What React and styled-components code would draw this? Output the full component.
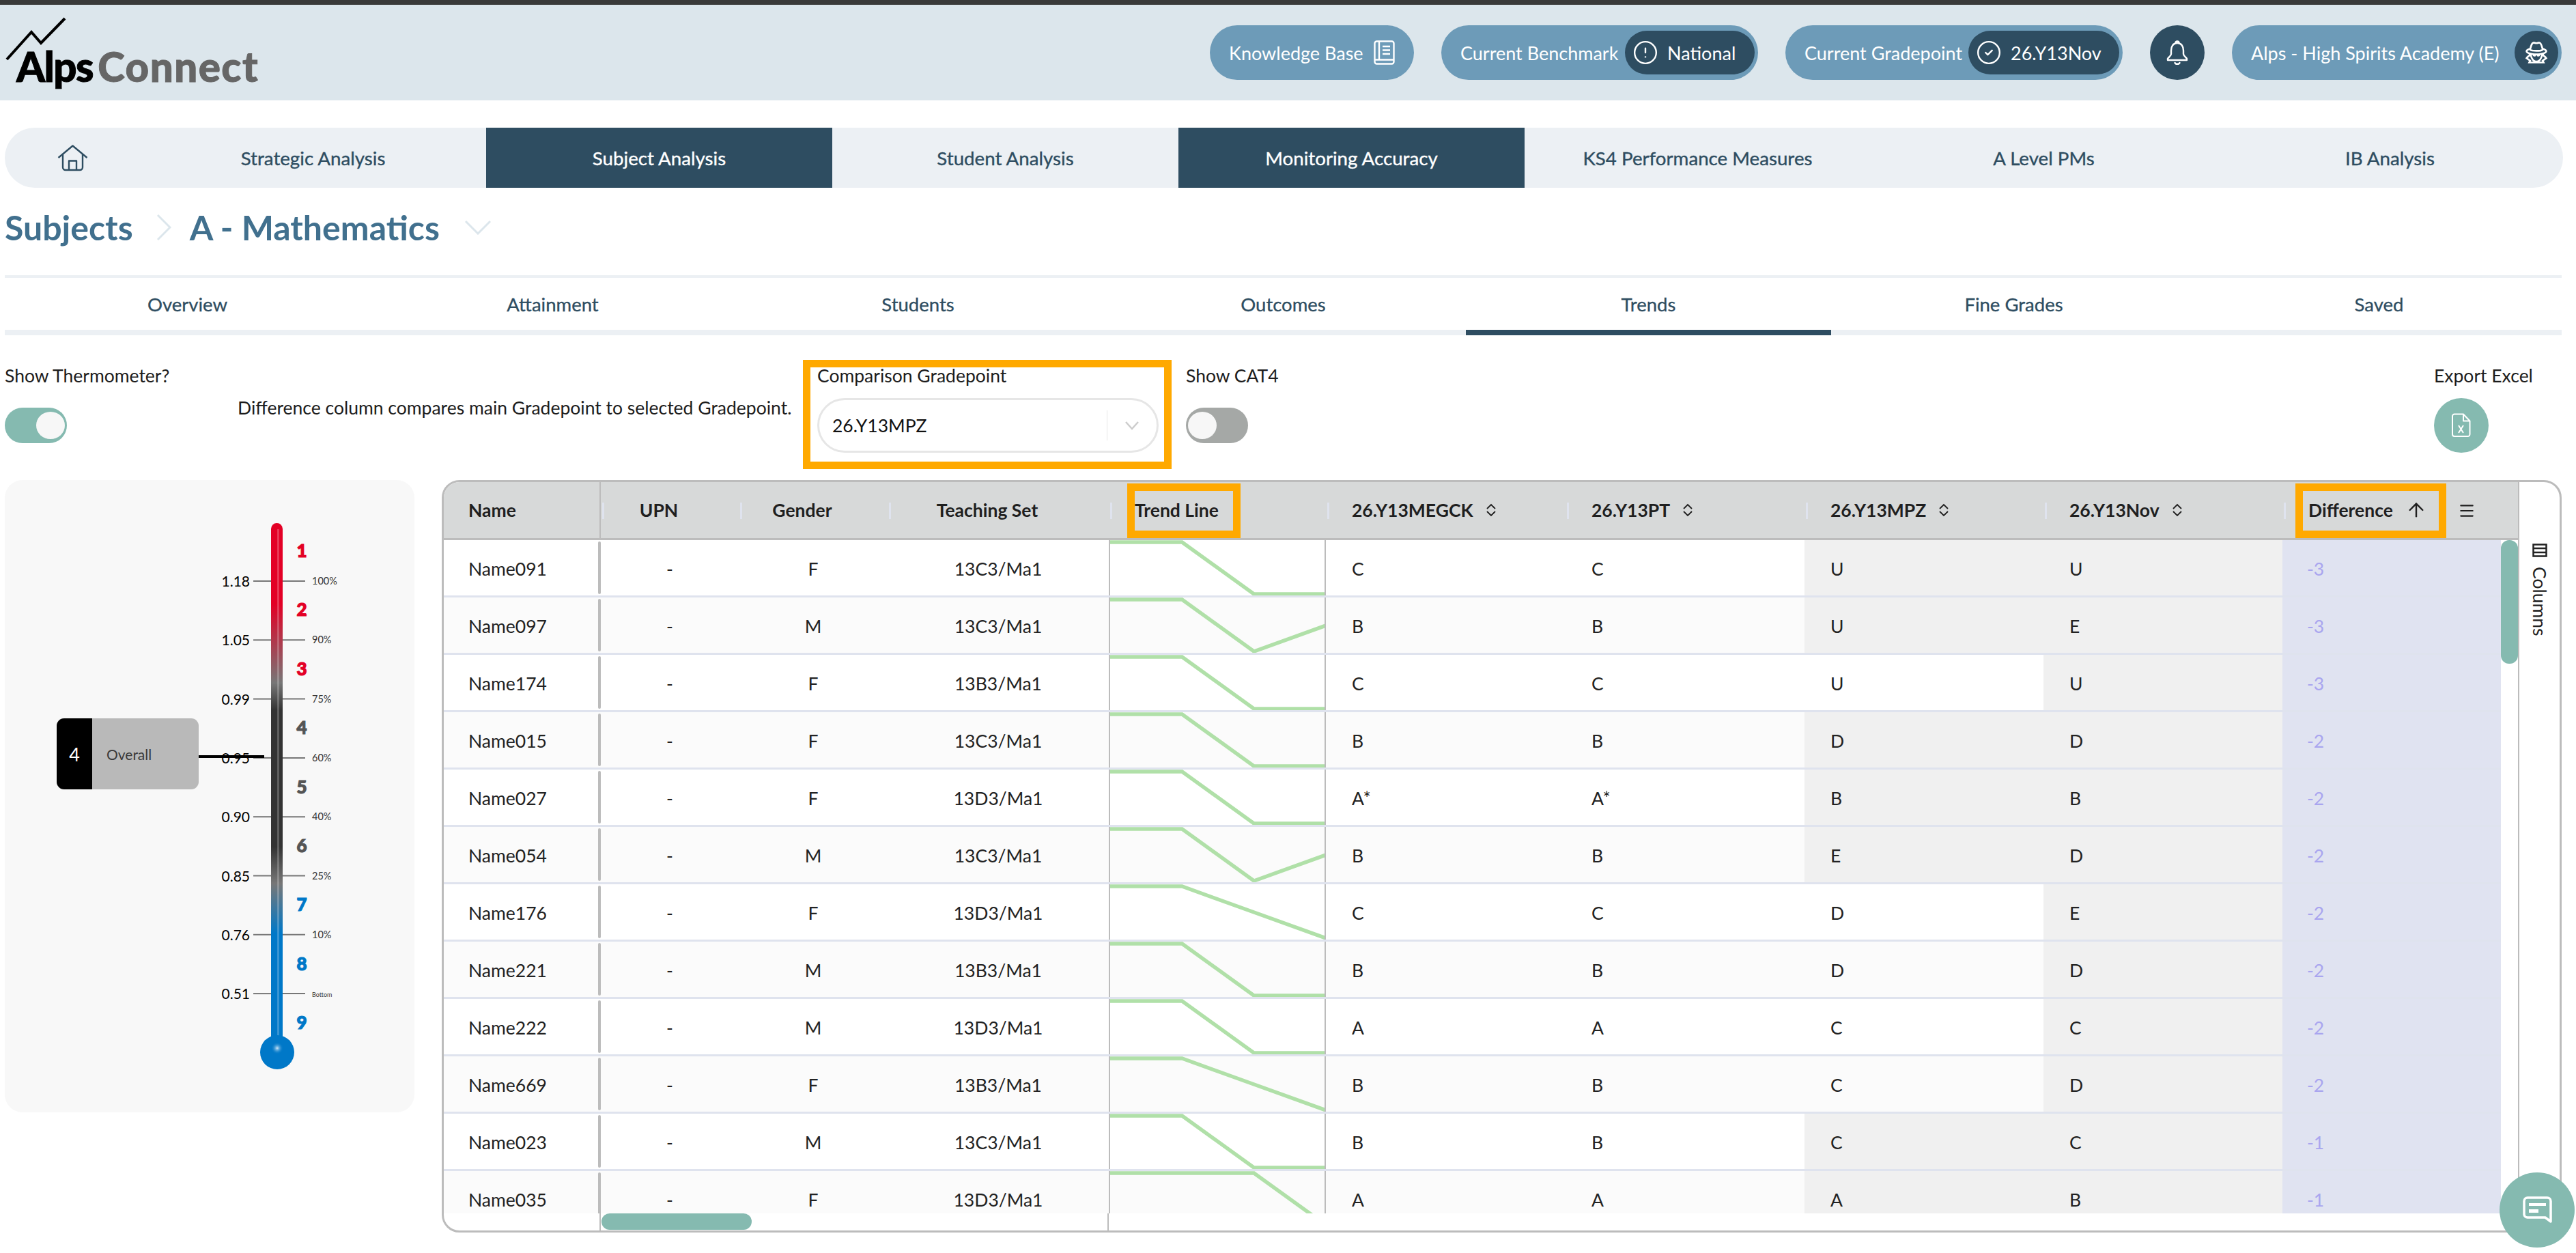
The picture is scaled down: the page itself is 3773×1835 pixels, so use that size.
import React from "react";
import styled, { createGlobalStyle } from "styled-components";
import { ArrowUp, CircleAlert, CircleCheck, Menu } from "lucide-react";
import { LiaUserSecretSolid } from "react-icons/lia";

const navy = "#2e4d61";
const steel = "#6d9bb8";
const teal = "#85bab0";
const orange = "#ffa900";
const mist = "#ecf0f4";
const frameGrey = "#bcbcbc";
const rowLine = "#dfe3ee";

const GlobalStyle = createGlobalStyle`
  html, body {
    margin: 0;
    padding: 0;
    background: #fff;
    font-family: Lato, "Noto Sans", sans-serif;
    color: #222;
  }
`;

const Page = styled.div`
  position: relative;
  width: 3773px;
  height: 1835px;
  overflow: hidden;
  background: #fff;
`;

const TopStrip = styled.div`
  height: 7px;
  background: #3a3a3a;
`;

const Header = styled.header`
  height: 140px;
  background: #dce6ec;
  display: flex;
  align-items: center;
  gap: 40px;
  padding-right: 21px;
  box-sizing: border-box;
`;

const Logo = styled.div`
  position: relative;
  margin-right: auto;
  margin-left: 24px;
  margin-top: 40px;
  display: flex;
  align-items: baseline;
  gap: 7px;
  font-family: Lato, sans-serif;
  font-weight: 900;
  font-size: 60px;
  line-height: 66px;
`;

const LogoAlps = styled.span`
  color: #000;
  letter-spacing: -1.5px;
  -webkit-text-stroke: 1px #000;
`;

const LogoConnect = styled.span`
  color: #666;
  letter-spacing: 1.5px;
  -webkit-text-stroke: 1px #666;
`;

const LogoPeak = styled.svg`
  position: absolute;
  left: -17px;
  top: -40px;
`;

const Pill = styled.div`
  width: ${(p) => p.$w}px;
  height: 80px;
  border-radius: 40px;
  background: ${steel};
  color: #fff;
  box-sizing: border-box;
  padding: 8px 5px 8px 28px;
  display: flex;
  align-items: center;
  justify-content: space-between;
  font-size: 27px;
  white-space: nowrap;
`;

const PlainPill = styled(Pill)`
  padding-right: 28px;
`;

const PillValue = styled.div`
  width: ${(p) => p.$w}px;
  height: 64px;
  border-radius: 32px;
  background: ${navy};
  display: flex;
  align-items: center;
  gap: 13px;
  padding-left: 11px;
  box-sizing: border-box;
`;

const Avatar = styled.div`
  width: 64px;
  height: 64px;
  border-radius: 50%;
  background: ${navy};
  display: flex;
  align-items: center;
  justify-content: center;
`;

const BellButton = styled.div`
  width: 80px;
  height: 80px;
  border-radius: 50%;
  background: ${navy};
  display: flex;
  align-items: center;
  justify-content: center;
`;

const Nav = styled.nav`
  margin: 40px 0 0 7px;
  width: 3747px;
  height: 88px;
  background: ${mist};
  border-radius: 44px;
  display: flex;
  overflow: hidden;
`;

const NavHome = styled.div`
  width: 198px;
  display: flex;
  align-items: center;
  justify-content: center;
`;

const NavItem = styled.div`
  width: 507px;
  display: flex;
  align-items: center;
  justify-content: center;
  font-size: 27.7px;
  -webkit-text-stroke: 0.35px currentColor;
  color: ${(p) => (p.$active ? "#fff" : navy)};
  background: ${(p) => (p.$active ? navy : "transparent")};
`;

const Breadcrumb = styled.div`
  height: 128px;
  box-sizing: border-box;
  padding: 0 0 12px 7px;
  display: flex;
  align-items: center;
  font-size: 50px;
  font-weight: 700;
  color: #41708e;
`;

const CrumbText = styled.span`
  white-space: nowrap;
  margin-left: ${(p) => p.$gap || 0}px;
`;

const CrumbChevron = styled.svg`
  margin-left: ${(p) => p.$gap}px;
`;

const Tabs = styled.div`
  margin-left: 7px;
  width: 3745px;
  display: grid;
  grid-template-columns: repeat(7, 1fr);
  border-top: 4px solid ${mist};
`;

const Tab = styled.div`
  height: 84px;
  box-sizing: border-box;
  padding-top: 1px;
  display: flex;
  align-items: center;
  justify-content: center;
  font-size: 27.5px;
  -webkit-text-stroke: 0.3px currentColor;
  color: ${navy};
  border-bottom: 8px solid ${(p) => (p.$active ? navy : mist)};
`;

const Controls = styled.div`
  margin-top: 36px;
  height: 160px;
  padding-left: 7px;
  display: flex;
  align-items: flex-start;
  font-size: 26.5px;
  color: #1c1c1c;
`;

const Field = styled.div`
  padding-top: 7px;
  width: ${(p) => p.$w}px;
  margin-left: ${(p) => p.$left || 0}px;
  flex: none;
`;

const FieldLabel = styled.div`
  line-height: 32px;
  white-space: nowrap;
`;

const Toggle = styled.div`
  margin-top: 31px;
  width: 91px;
  height: 52px;
  border-radius: 26px;
  background: ${(p) => (p.$on ? teal : "#a5a8a6")};
  box-sizing: border-box;
  padding: 6px 3px;
  display: flex;
  justify-content: ${(p) => (p.$on ? "flex-end" : "flex-start")};
  &::after {
    content: "";
    width: 42px;
    height: 40px;
    border-radius: 50%;
    background: #f7f7f7;
  }
`;

const DiffNote = styled.div`
  margin: 54px 0 0 96px;
  width: 828px;
  flex: none;
  line-height: 32px;
  white-space: nowrap;
`;

const HighlightBox = styled.div`
  width: 540px;
  height: 160px;
  flex: none;
  box-sizing: border-box;
  border: 11px solid ${orange};
  padding: 0 8px 0 10px;
`;

const HighlightLabel = styled(FieldLabel)`
  margin-top: -4px;
  padding-top: 0;
`;

const SelectBox = styled.div`
  margin-top: 17px;
  width: 500px;
  height: 80px;
  box-sizing: border-box;
  border: 3px solid #e6e6e6;
  border-radius: 40px;
  display: flex;
  align-items: center;
  padding-left: 19px;
  color: #111;
`;

const SelectValue = styled.span`
  flex: 1;
`;

const SelectArrow = styled.div`
  width: 72px;
  height: 44px;
  border-left: 1px solid #e6e6e6;
  display: flex;
  align-items: center;
  justify-content: center;
`;

const ExportField = styled(Field)`
  margin-left: auto;
  margin-right: 62px;
`;

const ExportButton = styled.div`
  margin-top: 17px;
  width: 80px;
  height: 80px;
  border-radius: 50%;
  background: ${teal};
  display: flex;
  align-items: center;
  justify-content: center;
`;

const Body = styled.div`
  margin-top: 16px;
  padding-left: 7px;
  display: flex;
  align-items: flex-start;
  gap: 40px;
`;

const ThermoPanel = styled.div`
  position: relative;
  width: 600px;
  height: 926px;
  border-radius: 26px;
  background: #f8f8f8;
  overflow: hidden;
  flex: none;
`;

const ThermoSvg = styled.svg`
  display: block;
  font-family: Lato, sans-serif;
`;

const LevelCard = styled.div`
  position: absolute;
  left: 76px;
  top: 349px;
  width: 208px;
  height: 104px;
  border-radius: 11px;
  overflow: hidden;
  background: #b9b9b9;
  display: flex;
  align-items: center;
  color: #3a3a3a;
  font-size: 21px;
`;

const LevelNumber = styled.div`
  width: 52px;
  height: 100%;
  background: #000;
  color: #fff;
  font-size: 27px;
  display: flex;
  align-items: center;
  justify-content: center;
  margin-right: 21px;
`;

const TableFrame = styled.div`
  width: 3105px;
  height: 1102px;
  box-sizing: border-box;
  border: 3px solid ${frameGrey};
  border-radius: 26px;
  overflow: hidden;
  display: flex;
  flex: none;
`;

const GridArea = styled.div`
  width: 3038px;
  flex: none;
  display: flex;
  flex-direction: column;
`;

const headColumns = "230px 202px 218px 324px 318px 351px 350px 350px 350px 345px";
const rowColumns = "230px 202px 218px 324px 318px 351px 350px 350px 350px 320px";

const HeadRow = styled.div`
  height: 85px;
  box-sizing: border-box;
  display: grid;
  grid-template-columns: ${headColumns};
  background: #d7d9d9;
  border-bottom: 3px solid ${frameGrey};
  font-size: 26.5px;
  font-weight: 700;
  color: #1f1f1f;
`;

const HeadCell = styled.div`
  position: relative;
  display: flex;
  align-items: center;
  justify-content: ${(p) => (p.$center ? "center" : "flex-start")};
  gap: 18px;
  box-sizing: border-box;
  padding: ${(p) => (p.$center ? "0 32px 0 0" : `0 0 0 ${p.$pad ?? 38}px`)};
  border-right: ${(p) => (p.$frozen ? `2px solid ${frameGrey}` : "none")};
  &::before {
    content: "";
    display: ${(p) => (p.$frozen ? "none" : "block")};
    position: absolute;
    left: 2px;
    top: 30px;
    height: 24px;
    width: 3px;
    background: #dfe3ee;
  }
`;

const CalloutBox = styled.div`
  position: absolute;
  top: 2px;
  left: ${(p) => p.$left}px;
  width: ${(p) => p.$w}px;
  height: 80px;
  box-sizing: border-box;
  border: 11px solid ${orange};
`;

const ColumnMenu = styled.div`
  position: absolute;
  left: 257px;
  top: 29px;
  display: flex;
`;

const BodyArea = styled.div`
  height: 986px;
  display: flex;
  overflow: hidden;
`;

const Rows = styled.div`
  width: 3013px;
  flex: none;
`;

const Row = styled.div`
  height: 84px;
  box-sizing: border-box;
  display: grid;
  grid-template-columns: ${rowColumns};
  background: ${(p) => (p.$even ? "#fbfbfb" : "#fff")};
  border-bottom: 3px solid ${rowLine};
  font-size: 26.5px;
  color: #222;
`;

const Cell = styled.div`
  display: flex;
  align-items: center;
  box-sizing: border-box;
  padding-top: 2px;
  justify-content: ${(p) => (p.$center ? "center" : "flex-start")};
  padding-left: ${(p) => (p.$center ? 0 : 38)}px;
  background: ${(p) => (p.$shade ? "#f0f0f0" : "transparent")};
`;

const NameCell = styled(Cell)`
  padding-left: 36px;
  position: relative;
  &::after {
    content: "";
    position: absolute;
    right: 0;
    top: 2px;
    bottom: 2px;
    width: 4px;
    border-radius: 2px;
    background: ${frameGrey};
  }
`;

const DiffCell = styled(Cell)`
  background: #e0e3f1;
  color: #a9a5ef;
  padding-left: 36px;
`;

const TrendCell = styled.div`
  border-left: 2px solid ${frameGrey};
  border-right: 2px solid ${frameGrey};
  overflow: hidden;
`;

const TrendSvg = styled.svg`
  display: block;
`;

const VScroll = styled.div`
  width: 25px;
  flex: none;
`;

const VThumb = styled.div`
  height: 181px;
  border-radius: 12px;
  background: ${teal};
`;

const HScroll = styled.div`
  height: 25px;
  display: grid;
  grid-template-columns: 230px 744px 1fr;
`;

const HScrollFrozen = styled.div`
  border-right: 2px solid ${frameGrey};
`;

const HScrollTrack = styled.div`
  border-right: 2px solid ${frameGrey};
`;

const HThumb = styled.div`
  width: 220px;
  height: 24px;
  margin-left: 1px;
  border-radius: 12px;
  background: ${teal};
`;

const SideBar = styled.div`
  flex: 1;
  border-left: 2px solid ${frameGrey};
  display: flex;
  flex-direction: column;
  align-items: center;
  padding-top: 90px;
  gap: 14px;
  color: #222;
  font-size: 26.5px;
`;

const SideLabel = styled.div`
  writing-mode: vertical-rl;
  line-height: 30px;
`;

const ChatButton = styled.div`
  position: absolute;
  right: 2px;
  bottom: 8px;
  width: 110px;
  height: 110px;
  border-radius: 50%;
  background: ${teal};
  display: flex;
  align-items: center;
  justify-content: center;
`;

const navItems = [
  ["Strategic Analysis", false],
  ["Subject Analysis", true],
  ["Student Analysis", false],
  ["Monitoring Accuracy", true],
  ["KS4 Performance Measures", false],
  ["A Level PMs", false],
  ["IB Analysis", false],
];

const tabs = ["Overview", "Attainment", "Students", "Outcomes", "Trends", "Fine Grades", "Saved"];

// y of each of the 4 trend points: 0 top, 1 bottom
const students = [
  { name: "Name091", gender: "F", set: "13C3/Ma1", grades: ["C", "C", "U", "U"], diff: -3, shade: [1, 1], line: [0, 0, 1, 1] },
  { name: "Name097", gender: "M", set: "13C3/Ma1", grades: ["B", "B", "U", "E"], diff: -3, shade: [1, 1], line: [0, 0, 1, 0.5] },
  { name: "Name174", gender: "F", set: "13B3/Ma1", grades: ["C", "C", "U", "U"], diff: -3, shade: [0, 1], line: [0, 0, 1, 1] },
  { name: "Name015", gender: "F", set: "13C3/Ma1", grades: ["B", "B", "D", "D"], diff: -2, shade: [1, 1], line: [0, 0, 1, 1] },
  { name: "Name027", gender: "F", set: "13D3/Ma1", grades: ["A*", "A*", "B", "B"], diff: -2, shade: [1, 1], line: [0, 0, 1, 1] },
  { name: "Name054", gender: "M", set: "13C3/Ma1", grades: ["B", "B", "E", "D"], diff: -2, shade: [1, 1], line: [0, 0, 1, 0.5] },
  { name: "Name176", gender: "F", set: "13D3/Ma1", grades: ["C", "C", "D", "E"], diff: -2, shade: [0, 1], line: [0, 0, 0.5, 1] },
  { name: "Name221", gender: "M", set: "13B3/Ma1", grades: ["B", "B", "D", "D"], diff: -2, shade: [0, 1], line: [0, 0, 1, 1] },
  { name: "Name222", gender: "M", set: "13D3/Ma1", grades: ["A", "A", "C", "C"], diff: -2, shade: [0, 1], line: [0, 0, 1, 1] },
  { name: "Name669", gender: "F", set: "13B3/Ma1", grades: ["B", "B", "C", "D"], diff: -2, shade: [0, 1], line: [0, 0, 0.5, 1] },
  { name: "Name023", gender: "M", set: "13C3/Ma1", grades: ["B", "B", "C", "C"], diff: -1, shade: [1, 1], line: [0, 0, 1, 1] },
  { name: "Name035", gender: "F", set: "13D3/Ma1", grades: ["A", "A", "A", "B"], diff: -1, shade: [1, 1], line: [0, 0, 0, 1] },
];

const ticks = [
  ["1.18", "100%"],
  ["1.05", "90%"],
  ["0.99", "75%"],
  ["0.95", "60%"],
  ["0.90", "40%"],
  ["0.85", "25%"],
  ["0.76", "10%"],
  ["0.51", "Bottom"],
];

function bandColour(n) {
  if (n <= 3) return "#e30025";
  if (n <= 6) return "#555555";
  return "#0078c8";
}

function HomeIcon() {
  return (
    <svg width="45" height="39" viewBox="0 0 45 39" fill="none" stroke={navy} strokeWidth="2.4" strokeLinejoin="round">
      <path d="M1.5 19 22.5 1.5 43.5 19" />
      <path d="M8 14v19a4 4 0 0 0 4 4h21a4 4 0 0 0 4-4V14" />
      <path d="M17 37V23.5h11V37" />
    </svg>
  );
}

function BookIcon() {
  return (
    <svg width="31" height="36" viewBox="0 0 31 36" fill="none" stroke="#fff" strokeWidth="2.4">
      <rect x="1.5" y="1.5" width="28" height="33" rx="3" />
      <path d="M1.5 28.5h28M8 1.5v27M13 9h11M13 14.5h11M13 20h11" />
    </svg>
  );
}

function BellIcon() {
  return (
    <svg width="32" height="38" viewBox="0 0 32 38" fill="none" stroke="#fff" strokeWidth="2.4" strokeLinejoin="round" strokeLinecap="round">
      <path d="M16 5c-6 0-9 5-9 11v5c0 3-3 4-5 7v2h28v-2c-2-3-5-4-5-7v-5c0-6-3-11-9-11z" />
      <path d="M13.5 5a2.5 2.5 0 0 1 5 0" />
      <path d="M12.5 34c1 2.4 6 2.4 7 0" />
    </svg>
  );
}

function ExcelIcon() {
  return (
    <svg width="28" height="36" viewBox="0 0 28 36" fill="none" stroke="#fff" strokeWidth="2" strokeLinejoin="round">
      <path d="M4 1.5h13l9.5 10V31a3 3 0 0 1-3 3H4a3 3 0 0 1-3-3V4.500a3 3 0 0 1 3-3z" />
      <path d="M17 1.500V11.500h9.500" />
      <path d="M10 18l7 11M17 18l-7 11" />
    </svg>
  );
}

function ChatIcon() {
  return (
    <svg width="43" height="40" viewBox="0 0 43 40" fill="none">
      <path d="M7 2h29a5 5 0 0 1 5 5v30l-8-6H7a5 5 0 0 1-5-5V7a5 5 0 0 1 5-5z" stroke="#fff" strokeWidth="3.500" strokeLinejoin="round" />
      <rect x="9" y="10" width="25" height="4" fill="#fff" />
      <rect x="9" y="19" width="14" height="5" fill="#fff" />
    </svg>
  );
}

function ColumnsIcon() {
  return (
    <svg width="22" height="20" viewBox="0 0 22 20" fill="none" stroke="#222" strokeWidth="2.500">
      <rect x="1.500" y="1.500" width="19" height="17" />
      <path d="M1.500 7h19M1.500 13h19" />
    </svg>
  );
}

function SortIcon() {
  return (
    <svg width="16" height="20" viewBox="0 0 16 20" fill="none" stroke="#1f1f1f" strokeWidth="1.8">
      <path d="M2 8l6-6 6 6M2 12l6 6 6-6" />
    </svg>
  );
}

function TrendLine({ line }) {
  // drawn in a 314 wide cell, row height 81
  const pts = line.map((v, i) => `${(i * 316) / 3},${3 + v * 76}`).join(" ");
  return (
    <TrendSvg width="314" height="81" viewBox="0 0 314 81">
      <polyline points={pts} fill="none" stroke="#b0e0a8" strokeWidth="5.500" />
    </TrendSvg>
  );
}

function Thermometer() {
  const tickY = (i) => 148 + i * 86.3;
  return (
    <ThermoSvg width="600" height="926" viewBox="0 0 600 926">
      <defs>
        <linearGradient id="tube" gradientUnits="userSpaceOnUse" x1="0" y1="63" x2="0" y2="860">
          <stop offset={(181 - 63) / 797} stopColor="#e30025" />
          <stop offset={(297 - 63) / 797} stopColor="#777777" />
          <stop offset={(337 - 63) / 797} stopColor="#333333" />
          <stop offset={(537 - 63) / 797} stopColor="#333333" />
          <stop offset={(591 - 63) / 797} stopColor="#777777" />
          <stop offset={(664 - 63) / 797} stopColor="#0078c8" />
        </linearGradient>
        <radialGradient id="bulbShine">
          <stop offset="0" stopColor="#cfe6f7" />
          <stop offset="1" stopColor="#0078c8" stopOpacity="0" />
        </radialGradient>
      </defs>
      {ticks.map(([left, right], i) => (
        <g key={left}>
          <line x1="364" x2="390" y1={tickY(i)} y2={tickY(i)} stroke="#777" strokeWidth="2" />
          <line x1="407" x2="440" y1={tickY(i)} y2={tickY(i)} stroke="#777" strokeWidth="2" />
          <text x="359" y={tickY(i) + 8} textAnchor="end" fontSize="21" fill="#000">{left}</text>
          <text x="450" y={tickY(i) + 5} fontSize={right === "Bottom" ? 9 : 14.500} fill="#333">{right}</text>
        </g>
      ))}
      {[1, 2, 3, 4, 5, 6, 7, 8, 9].map((n, i) => (
        <text key={n} x="435" y={103 + i * 86.4 + 10} textAnchor="middle" fontSize="26" fontWeight="900" fill={bandColour(n)} stroke={bandColour(n)} strokeWidth="1.200">{n}</text>
      ))}
      <rect x="390" y="63" width="17" height="790" rx="8.500" fill="url(#tube)" />
      <rect x="399" y="72" width="3" height="760" fill="#fff" opacity="0.22" />
      <circle cx="399" cy="838" r="25" fill="#0078c8" />
      <circle cx="399" cy="832" r="9" fill="url(#bulbShine)" />
      <rect x="284" y="403" width="96" height="4" fill="#000" />
    </ThermoSvg>
  );
}

function StudentRow({ s, even }) {
  return (
    <Row $even={even}>
      <NameCell>{s.name}</NameCell>
      <Cell $center>-</Cell>
      <Cell $center>{s.gender}</Cell>
      <Cell $center>{s.set}</Cell>
      <TrendCell>
        <TrendLine line={s.line} />
      </TrendCell>
      <Cell>{s.grades[0]}</Cell>
      <Cell>{s.grades[1]}</Cell>
      <Cell $shade={s.shade[0]}>{s.grades[2]}</Cell>
      <Cell $shade={s.shade[1]}>{s.grades[3]}</Cell>
      <DiffCell>{s.diff}</DiffCell>
    </Row>
  );
}

export default function App() {
  return (
    <Page>
      <GlobalStyle />
      <TopStrip />
      <Header>
        <Logo>
          <LogoPeak width="92" height="66" viewBox="0 0 92 66" fill="none" stroke="#000" strokeWidth="4">
            <path d="M3 63 39 23 53 39 88 3" />
          </LogoPeak>
          <LogoAlps>Alps</LogoAlps>
          <LogoConnect>Connect</LogoConnect>
        </Logo>
        <PlainPill $w={299}>
          Knowledge Base
          <BookIcon />
        </PlainPill>
        <Pill $w={464}>
          Current Benchmark
          <PillValue $w={190}>
            <CircleAlert size={38} strokeWidth={1.5} />
            National
          </PillValue>
        </Pill>
        <Pill $w={494}>
          Current Gradepoint
          <PillValue $w={221}>
            <CircleCheck size={38} strokeWidth={1.5} />
            26.Y13Nov
          </PillValue>
        </Pill>
        <BellButton>
          <BellIcon />
        </BellButton>
        <Pill $w={483}>
          Alps - High Spirits Academy (E)
          <Avatar>
            <LiaUserSecretSolid size={42} color="#fff" />
          </Avatar>
        </Pill>
      </Header>

      <Nav>
        <NavHome>
          <HomeIcon />
        </NavHome>
        {navItems.map(([label, active]) => (
          <NavItem key={label} $active={active}>{label}</NavItem>
        ))}
      </Nav>

      <Breadcrumb>
        <CrumbText>Subjects</CrumbText>
        <CrumbChevron $gap={34} width="22" height="40" viewBox="0 0 22 40" fill="none" stroke="#dce6ec" strokeWidth="3">
          <path d="M2 2l18 18L2 38" />
        </CrumbChevron>
        <CrumbText $gap={27}>A - Mathematics</CrumbText>
        <CrumbChevron $gap={36} width="40" height="22" viewBox="0 0 40 22" fill="none" stroke="#dce6ec" strokeWidth="3">
          <path d="M2 2l18 18L38 2" />
        </CrumbChevron>
      </Breadcrumb>

      <Tabs>
        {tabs.map((t) => (
          <Tab key={t} $active={t === "Trends"}>{t}</Tab>
        ))}
      </Tabs>

      <Controls>
        <Field $w={245}>
          <FieldLabel>Show Thermometer?</FieldLabel>
          <Toggle $on />
        </Field>
        <DiffNote>Difference column compares main Gradepoint to selected Gradepoint.</DiffNote>
        <HighlightBox>
          <HighlightLabel>Comparison Gradepoint</HighlightLabel>
          <SelectBox>
            <SelectValue>26.Y13MPZ</SelectValue>
            <SelectArrow>
              <svg width="22" height="14" viewBox="0 0 22 14" fill="none" stroke="#ccc" strokeWidth="2.500">
                <path d="M2 2l9 10 9-10" />
              </svg>
            </SelectArrow>
          </SelectBox>
        </HighlightBox>
        <Field $w={120} $left={21}>
          <FieldLabel>Show CAT4</FieldLabel>
          <Toggle />
        </Field>
        <ExportField $w={146}>
          <FieldLabel>Export Excel</FieldLabel>
          <ExportButton>
            <ExcelIcon />
          </ExportButton>
        </ExportField>
      </Controls>

      <Body>
        <ThermoPanel>
          <Thermometer />
          <LevelCard>
            <LevelNumber>4</LevelNumber>
            Overall
          </LevelCard>
        </ThermoPanel>

        <TableFrame>
          <GridArea>
            <HeadRow>
              <HeadCell $frozen $pad={36}>Name</HeadCell>
              <HeadCell $center>UPN</HeadCell>
              <HeadCell $center>Gender</HeadCell>
              <HeadCell $center>Teaching Set</HeadCell>
              <HeadCell>
                Trend Line
                <CalloutBox $left={27} $w={166} />
              </HeadCell>
              <HeadCell>26.Y13MEGCK <SortIcon /></HeadCell>
              <HeadCell>26.Y13PT <SortIcon /></HeadCell>
              <HeadCell>26.Y13MPZ <SortIcon /></HeadCell>
              <HeadCell>26.Y13Nov <SortIcon /></HeadCell>
              <HeadCell>
                Difference <ArrowUp size={32} strokeWidth={1.8} />
                <CalloutBox $left={19} $w={221} />
                <ColumnMenu>
                  <Menu size={26} strokeWidth={2} />
                </ColumnMenu>
              </HeadCell>
            </HeadRow>
            <BodyArea>
              <Rows>
                {students.map((s, i) => (
                  <StudentRow key={s.name} s={s} even={i % 2 === 1} />
                ))}
              </Rows>
              <VScroll>
                <VThumb />
              </VScroll>
            </BodyArea>
            <HScroll>
              <HScrollFrozen />
              <HScrollTrack>
                <HThumb />
              </HScrollTrack>
            </HScroll>
          </GridArea>
          <SideBar>
            <ColumnsIcon />
            <SideLabel>Columns</SideLabel>
          </SideBar>
        </TableFrame>
      </Body>

      <ChatButton>
        <ChatIcon />
      </ChatButton>
    </Page>
  );
}
